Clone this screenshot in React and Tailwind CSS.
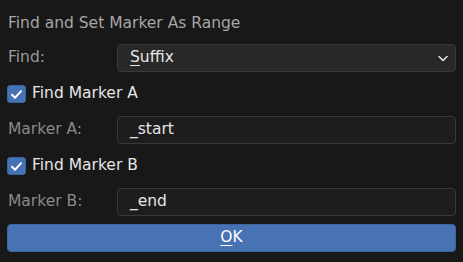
import React from 'react';

const font = { fontFamily: '"DejaVu Sans", "Noto Sans", sans-serif' };

const Check = ({ label }) => (
  <div className="h-9 flex items-center">
    <div className="w-[19px] h-[18px] ml-[7px] rounded-[3px] bg-[#4772b3] border border-[#3b64a0] flex items-center justify-center">
      <svg width="13" height="13" viewBox="0 0 13 13">
        <path d="M2 6.8 L5 9.8 L11 3.2" fill="none" stroke="#ffffff" strokeWidth="2" strokeLinecap="round" strokeLinejoin="round" />
      </svg>
    </div>
    <span className="ml-[6px] text-[15.5px] text-[#e6e6e6]">{label}</span>
  </div>
);

const Field = ({ label, labelColor, children }) => (
  <div className="h-9 flex items-center">
    <span className={`w-[117px] pl-2 text-[15.5px] ${labelColor}`}>{label}</span>
    <div className="flex-1 mr-[7px] h-7 rounded-[4px] bg-[#1d1d1d] border border-[#3a3a3a] flex items-center pl-3 pr-2 text-[15.5px] text-[#e6e6e6]">
      {children}
    </div>
  </div>
);

export default function App() {
  return (
    <div className="w-[463px] h-[262px] bg-[#181818] pt-1 overflow-hidden" style={font}>
      <div className="h-9 flex items-center pl-2 pt-[3px] text-[15.5px] text-[#a6a6a6]">
        Find and Set Marker As Range
      </div>

      <div className="h-9 flex items-center">
        <span className="w-[117px] pl-2 text-[15.5px] text-[#9a9a9a]">Find:</span>
        <div className="flex-1 mr-[7px] h-7 rounded-[4px] bg-[#282828] border border-[#3a3a3a] flex items-center justify-between pl-3 pr-[6px] text-[15.5px] text-[#e6e6e6]">
          <span>
            <span className="underline underline-offset-[3px]">S</span>uffix
          </span>
          <svg width="12" height="12" viewBox="0 0 12 12">
            <path d="M2 4.5 L6 8.5 L10 4.5" fill="none" stroke="#e0e0e0" strokeWidth="1.6" strokeLinecap="round" strokeLinejoin="round" />
          </svg>
        </div>
      </div>

      <Check label="Find Marker A" />
      <Field label="Marker A:" labelColor="text-[#8a8a8a]">_start</Field>
      <Check label="Find Marker B" />
      <Field label="Marker B:" labelColor="text-[#8a8a8a]">_end</Field>

      <div className="h-9 flex items-center px-[7px]">
        <button className="w-full h-7 rounded-[4px] bg-[#4772b3] border border-[#3e659f] text-[15.5px] text-white">
          <span className="underline underline-offset-[3px]">O</span>K
        </button>
      </div>
    </div>
  );
}
